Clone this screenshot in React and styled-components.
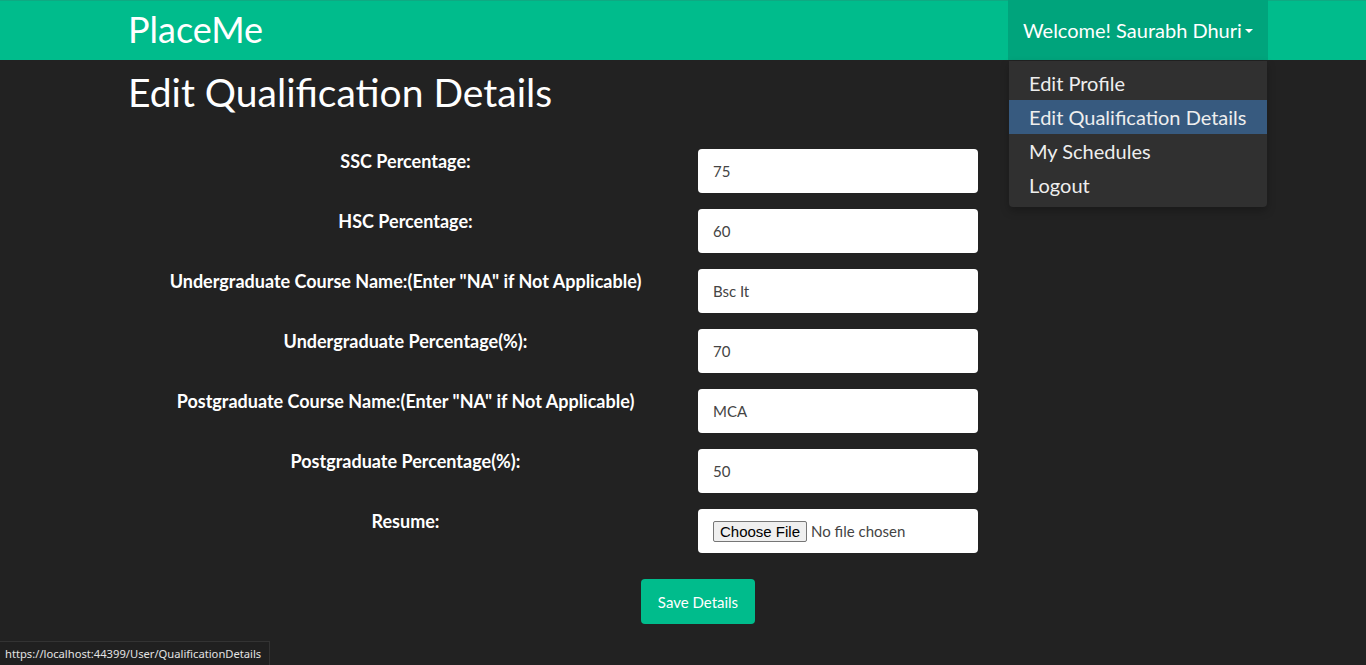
import React from "react";
import styled, { createGlobalStyle } from "styled-components";

const Global = createGlobalStyle`
  html, body { margin: 0; padding: 0; background: #222222; height: 100%; }
  body { font-family: Lato, "Liberation Sans", sans-serif; color: #ffffff; overflow: hidden; }
  * { box-sizing: border-box; }
`;

const Page = styled.div`
  min-height: 665px;
  background: #222222;
`;

const Navbar = styled.nav`
  height: 60px;
  background: #00bc8c;
  border-top: 1px solid #0fa982;
`;

const Container = styled.div`
  max-width: 1140px;
  margin: 0 auto;
  padding: 0 15px;
`;

const NavInner = styled(Container)`
  display: flex;
  align-items: stretch;
  justify-content: space-between;
  height: 100%;
`;

const Brand = styled.a`
  font-size: 36px;
  line-height: 59px;
  color: #ffffff;
  text-decoration: none;
  margin-top: -1px;
`;

const NavItem = styled.div`
  position: relative;
  margin-right: -30px;
  margin-top: -1px;
`;

const Toggle = styled.a`
  display: flex;
  align-items: center;
  height: 60px;
  width: 260px;
  padding: 0 15px;
  background: #00a47c;
  color: #ffffff;
  font-size: 20px;
  text-decoration: none;
`;

const Caret = styled.span`
  display: inline-block;
  margin-left: 3px;
  margin-top: 2px;
  border-top: 4px solid #ffffff;
  border-left: 4px solid transparent;
  border-right: 4px solid transparent;
`;

const Menu = styled.ul`
  position: absolute;
  top: 61px;
  left: 1px;
  width: 258px;
  margin: 0;
  padding: 5px 0 5px;
  list-style: none;
  background: #303030;
  border-radius: 0 0 4px 4px;
  box-shadow: 0 4px 8px rgba(0, 0, 0, 0.25);
`;

const MenuItem = styled.li`
  padding: 5px 20px;
  font-size: 20px;
  line-height: 24px;
  color: #eeeeee;
  background: ${(p) => (p.$active ? "#375a7f" : "transparent")};
  white-space: nowrap;
`;

const Heading = styled.h1`
  margin: 8px 0 33px;
  font-size: 39px;
  font-weight: 400;
  line-height: 48px;
  color: #ffffff;
`;

const Form = styled.form`
  display: grid;
  grid-template-columns: 555px 280px;
  column-gap: 15px;
  row-gap: 16px;
`;

const Label = styled.label`
  text-align: center;
  font-size: 18px;
  font-weight: 700;
  line-height: 27px;
  margin-top: -1px;
  color: #ffffff;
`;

const Field = styled.div`
  height: 44px;
  background: #ffffff;
  border-radius: 4px;
  display: flex;
  align-items: center;
  padding: 0 15px;
`;

const Input = styled.input`
  width: 100%;
  border: none;
  outline: none;
  background: transparent;
  font-family: Lato, "Liberation Sans", sans-serif;
  font-size: 15px;
  color: #444444;
  padding: 0;
`;

const FileInput = styled.input`
  font-family: Lato, "Liberation Sans", sans-serif;
  font-size: 15px;
  color: #444444;
  &::file-selector-button {
    font-family: Arial, "Liberation Sans", sans-serif;
    font-size: 15px;
    color: #000;
    background: #efefef;
    border: 1px solid #767676;
    border-radius: 2px;
    padding: 1px 6px;
    margin-right: 4px;
  }
`;

const ButtonRow = styled.div`
  display: flex;
  justify-content: center;
  padding-left: 30px;
  margin-top: 26px;
`;

const SaveButton = styled.button`
  width: 114px;
  height: 45px;
  border: none;
  border-radius: 4px;
  background: #00bc8c;
  color: #ffffff;
  font-family: Lato, "Liberation Sans", sans-serif;
  font-size: 15px;
`;

const StatusBar = styled.div`
  position: fixed;
  left: 0;
  bottom: 0;
  height: 24px;
  padding: 0 8px 0 5px;
  display: flex;
  align-items: center;
  background: #202020;
  border-top: 1px solid #333333;
  border-right: 1px solid #333333;
  color: #e3e3e3;
  font-family: "Noto Sans", "Open Sans", sans-serif;
  font-size: 11.2px;
`;

const fields = [
  ["SSC Percentage:", "75"],
  ["HSC Percentage:", "60"],
  ['Undergraduate Course Name:(Enter "NA" if Not Applicable)', "Bsc It"],
  ["Undergraduate Percentage(%):", "70"],
  ['Postgraduate Course Name:(Enter "NA" if Not Applicable)', "MCA"],
  ["Postgraduate Percentage(%):", "50"],
];

export default function App() {
  return (
    <Page>
      <Global />
      <Navbar>
        <NavInner>
          <Brand href="#">PlaceMe</Brand>
          <NavItem>
            <Toggle href="#">
              Welcome! Saurabh Dhuri
              <Caret />
            </Toggle>
            <Menu>
              <MenuItem>Edit Profile</MenuItem>
              <MenuItem $active>Edit Qualification Details</MenuItem>
              <MenuItem>My Schedules</MenuItem>
              <MenuItem>Logout</MenuItem>
            </Menu>
          </NavItem>
        </NavInner>
      </Navbar>
      <Container>
        <Heading>Edit Qualification Details</Heading>
        <Form onSubmit={(e) => e.preventDefault()}>
          {fields.map(([label, value]) => (
            <React.Fragment key={label}>
              <Label>{label}</Label>
              <Field>
                <Input defaultValue={value} />
              </Field>
            </React.Fragment>
          ))}
          <Label>Resume:</Label>
          <Field>
            <FileInput type="file" />
          </Field>
        </Form>
        <ButtonRow>
          <SaveButton type="button">Save Details</SaveButton>
        </ButtonRow>
      </Container>
      <StatusBar>https://localhost:44399/User/QualificationDetails</StatusBar>
    </Page>
  );
}
